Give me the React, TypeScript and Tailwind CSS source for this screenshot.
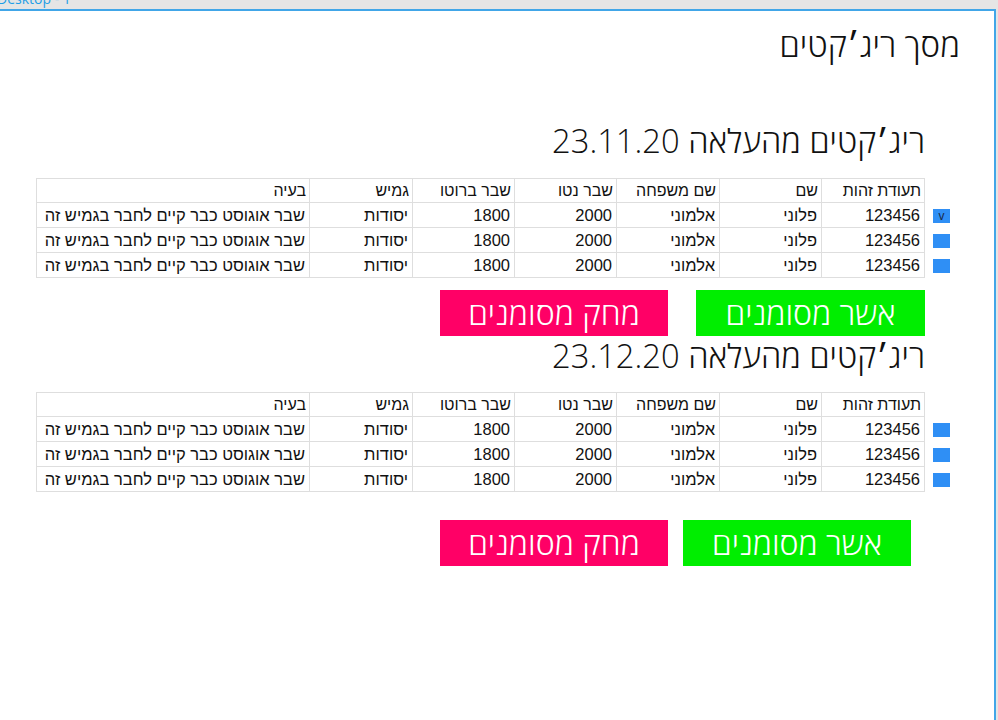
import React from "react";

const rows = [0, 1, 2];
const headers = ["תעודת זהות", "שם", "שם משפחה", "שבר נטו", "שבר ברוטו", "גמיש", "בעיה"];
const cells = ["123456", "פלוני", "אלמוני", "2000", "1800", "יסודות", "שבר אוגוסט כבר קיים לחבר בגמיש זה"];
const widths = ["w-[103px]", "w-[102px]", "w-[103px]", "w-[102px]", "w-[102px]", "w-[103px]", "w-[273px]"];

function Checkbox({ checked }: { checked?: boolean }) {
  return (
    <div className="w-[17px] h-[14px] bg-[#2f8ff5] flex items-center justify-center text-[12px] leading-none text-[#1a2a4a]" style={{ fontFamily: "'Liberation Sans', sans-serif" }}>
      {checked ? "v" : ""}
    </div>
  );
}

function Table({ firstChecked }: { firstChecked?: boolean }) {
  return (
    <div className="flex flex-col" style={{ fontFamily: "'Liberation Sans', 'DejaVu Sans', sans-serif" }}>
      <div className="flex h-[25px]">
        <div className="w-[30px]" />
        <div className="flex border-t border-r border-b border-[#dedede]">
          {headers.map((h, i) => (
            <div key={i} className={`${widths[i]} h-[24px] border-l border-[#dedede] pr-[3px] text-[16px] leading-[24px] text-[#111] text-right whitespace-nowrap overflow-hidden`}>
              {h}
            </div>
          ))}
        </div>
      </div>
      {rows.map((r) => (
        <div key={r} className="flex h-[25px]">
          <div className="w-[30px] flex items-center justify-start pr-[5px]">
            <Checkbox checked={firstChecked && r === 0} />
          </div>
          <div className="flex border-r border-b border-[#dedede]">
            {cells.map((c, i) => (
              <div key={i} className={`${widths[i]} h-[24px] border-l border-[#dedede] pr-[4px] text-[16.5px] leading-[24px] text-[#111] text-right whitespace-nowrap overflow-hidden`}>
                {c}
              </div>
            ))}
          </div>
        </div>
      ))}
    </div>
  );
}

function Btn({ color, children, w }: { color: string; children: React.ReactNode; w: string }) {
  return (
    <div className={`${color} ${w} h-[46px] flex items-center justify-center text-white text-[32px] font-light leading-none`}>
      {children}
    </div>
  );
}

export default function App() {
  const heading = { fontFamily: "'Open Sans', 'DejaVu Sans', sans-serif" };
  return (
    <div className="w-[998px] h-[720px] bg-[#e5e5e5] overflow-hidden flex flex-col">
      <div className="h-[9px] relative overflow-visible">
        <div className="absolute left-[-3px] top-[-9px] text-[14px] leading-[16px] text-[#1f9ee6]" style={{ fontFamily: "'Open Sans', sans-serif" }}>
          Desktop - 1
        </div>
      </div>
      <div className="flex flex-1">
        <div dir="rtl" className="w-[996px] bg-white border-t-2 border-r-2 border-[#41a6e8] flex flex-col" style={heading}>
          <div className="pr-[34px] pt-[14px] text-[33px] font-light leading-[40px] text-[#111]">מסך ריג׳קטים</div>
          <div className="pr-[39px] mt-[56px]">
            <div className="pr-[30px] text-[32.7px] font-light leading-[40px] text-[#111]">ריג׳קטים מהעלאה 23.11.20</div>
            <div className="mt-[17px]">
              <Table firstChecked />
            </div>
            <div className="flex gap-[28px] pr-[30px] mt-[12px]">
              <Btn color="bg-[#00ee00]" w="w-[229px]">אשר מסומנים</Btn>
              <Btn color="bg-[#ff0066]" w="w-[228px]">מחק מסומנים</Btn>
            </div>
            <div className="pr-[30px] text-[32.7px] font-light leading-[36px] text-[#111] mt-[2px]">ריג׳קטים מהעלאה 23.12.20</div>
            <div className="mt-[18px]">
              <Table />
            </div>
            <div className="flex gap-[15px] pr-[44px] mt-[28px]">
              <Btn color="bg-[#00ee00]" w="w-[228px]">אשר מסומנים</Btn>
              <Btn color="bg-[#ff0066]" w="w-[228px]">מחק מסומנים</Btn>
            </div>
          </div>
        </div>
      </div>
    </div>
  );
}
